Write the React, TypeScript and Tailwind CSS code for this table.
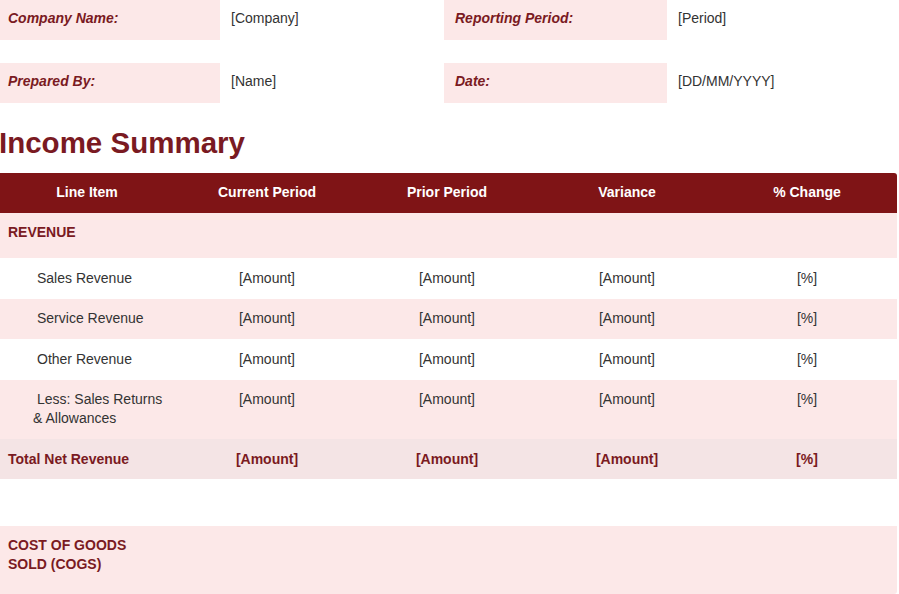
import React from "react";

const font = { fontFamily: '"Liberation Sans", Arial, sans-serif' };

function InfoRow({ l1, v1, l2, v2 }: { l1: string; v1: string; l2: string; v2: string }) {
  return (
    <div className="flex h-[40px] text-[14px] leading-[19px]">
      <div className="w-[223px] bg-[#fce8e8] pl-[11px] pt-[9px] font-bold italic text-[#7a1a22]">{l1}</div>
      <div className="w-[224px] pl-[11px] pt-[9px] text-[#333333]">{v1}</div>
      <div className="w-[223px] bg-[#fce8e8] pl-[11px] pt-[9px] font-bold italic text-[#7a1a22]">{l2}</div>
      <div className="flex-1 pl-[11px] pt-[9px] text-[#333333]">{v2}</div>
    </div>
  );
}

const cols = ["Line Item", "Current Period", "Prior Period", "Variance", "% Change"];

function DataRow({ label, pink }: { label: React.ReactNode; pink?: boolean }) {
  return (
    <div className={`grid grid-cols-5 text-[14px] leading-[19px] text-[#333333] ${pink ? "bg-[#fce8e8]" : "bg-white"}`}>
      <div className="pl-[36px] pr-2 py-[10.75px] indent-[4px]">{label}</div>
      <div className="py-[10.75px] text-center">[Amount]</div>
      <div className="py-[10.75px] text-center">[Amount]</div>
      <div className="py-[10.75px] text-center">[Amount]</div>
      <div className="py-[10.75px] text-center">[%]</div>
    </div>
  );
}

export default function App() {
  return (
    <div className="w-[899px] h-[594px] overflow-hidden bg-white" style={font}>
      <div className="-ml-[3px] w-[902px]">
        <div className="flex flex-col gap-[23px]">
          <InfoRow l1="Company Name:" v1="[Company]" l2="Reporting Period:" v2="[Period]" />
          <InfoRow l1="Prepared By:" v1="[Name]" l2="Date:" v2="[DD/MM/YYYY]" />
        </div>
        <h1 className="mt-[22px] mb-[12px] h-[36px] pl-[2px] text-[29.5px] leading-[36px] font-bold text-[#7a1a22]">
          Income Summary
        </h1>
        <div className="w-[900px] rounded-r-[3px] overflow-hidden">
          <div className="grid grid-cols-5 h-[40px] bg-[#7f1416] text-[14px] font-bold text-white">
            {cols.map((c) => (
              <div key={c} className="flex items-center justify-center pb-[1px]">
                {c}
              </div>
            ))}
          </div>
          <div className="bg-[#fce8e8] pl-[11px] pt-[10px] pb-[16px] text-[14px] leading-[19px] font-bold text-[#7a1a22]">
            REVENUE
          </div>
          <DataRow label="Sales Revenue" />
          <DataRow label="Service Revenue" pink />
          <DataRow label="Other Revenue" />
          <DataRow
            label={
              <>
                Less: Sales Returns
                <br />& Allowances
              </>
            }
            pink
          />
          <div className="grid grid-cols-5 h-[40px] bg-[#f4e4e5] text-[14px] leading-[19px] font-bold text-[#7a1a22]">
            <div className="pl-[11px] pt-[10.5px]">Total Net Revenue</div>
            <div className="pt-[10.5px] text-center">[Amount]</div>
            <div className="pt-[10.5px] text-center">[Amount]</div>
            <div className="pt-[10.5px] text-center">[Amount]</div>
            <div className="pt-[10.5px] text-center">[%]</div>
          </div>
          <div className="h-[47px] bg-white" />
          <div className="bg-[#fce8e8] pl-[11px] pt-[10px] pb-[20px] text-[14px] leading-[19px] font-bold text-[#7a1a22]">
            COST OF GOODS
            <br />
            SOLD (COGS)
          </div>
        </div>
      </div>
    </div>
  );
}
